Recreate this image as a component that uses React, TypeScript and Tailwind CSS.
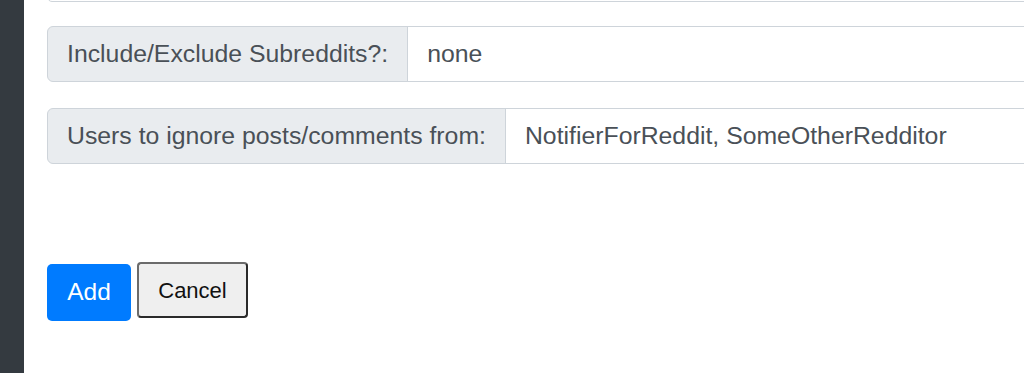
import React from 'react';

const font = { fontFamily: '"Liberation Sans", Arial, sans-serif' };

const fields = [
  { label: 'Include/Exclude Subreddits?:', value: 'none' },
  { label: 'Users to ignore posts/comments from:', value: 'NotifierForReddit, SomeOtherRedditor' },
];

export default function App() {
  return (
    <div className="flex h-[373px] w-[1024px] overflow-hidden bg-white" style={font}>
      <div className="w-[24px] shrink-0 bg-[#343a40]" />
      <div className="shrink-0 pl-[23px]">
        <div className="-mt-[56px] h-[58px] w-[1080px] rounded-[5px] border border-[#ced4da]" />
        <div className="mt-[24px] flex w-[1080px] flex-col gap-[26px]">
          {fields.map((f, i) => (
            <div key={i} className="flex h-[56px] text-[24.8px] text-[#495057]">
              <span className="flex items-center rounded-l-[6px] border border-[#ced4da] bg-[#e9ecef] px-[19px] whitespace-nowrap">
                {f.label}
              </span>
              <span className="-ml-px flex flex-1 items-center border border-[#ced4da] bg-white px-[19px]">
                {f.value}
              </span>
            </div>
          ))}
        </div>
        <div className="mt-[98px] flex items-start gap-[6px]">
          <button className="mt-[2px] h-[57px] w-[84px] rounded-[5px] bg-[#007bff] text-[24.5px] text-white">
            Add
          </button>
          <button className="h-[56px] w-[111px] rounded-[4px] border-2 border-t-[#6b6b6b] border-l-[#6b6b6b] border-r-[#2a2a2a] border-b-[#2a2a2a] bg-[#efefef] text-[22px] text-[#111]">
            Cancel
          </button>
        </div>
      </div>
    </div>
  );
}
